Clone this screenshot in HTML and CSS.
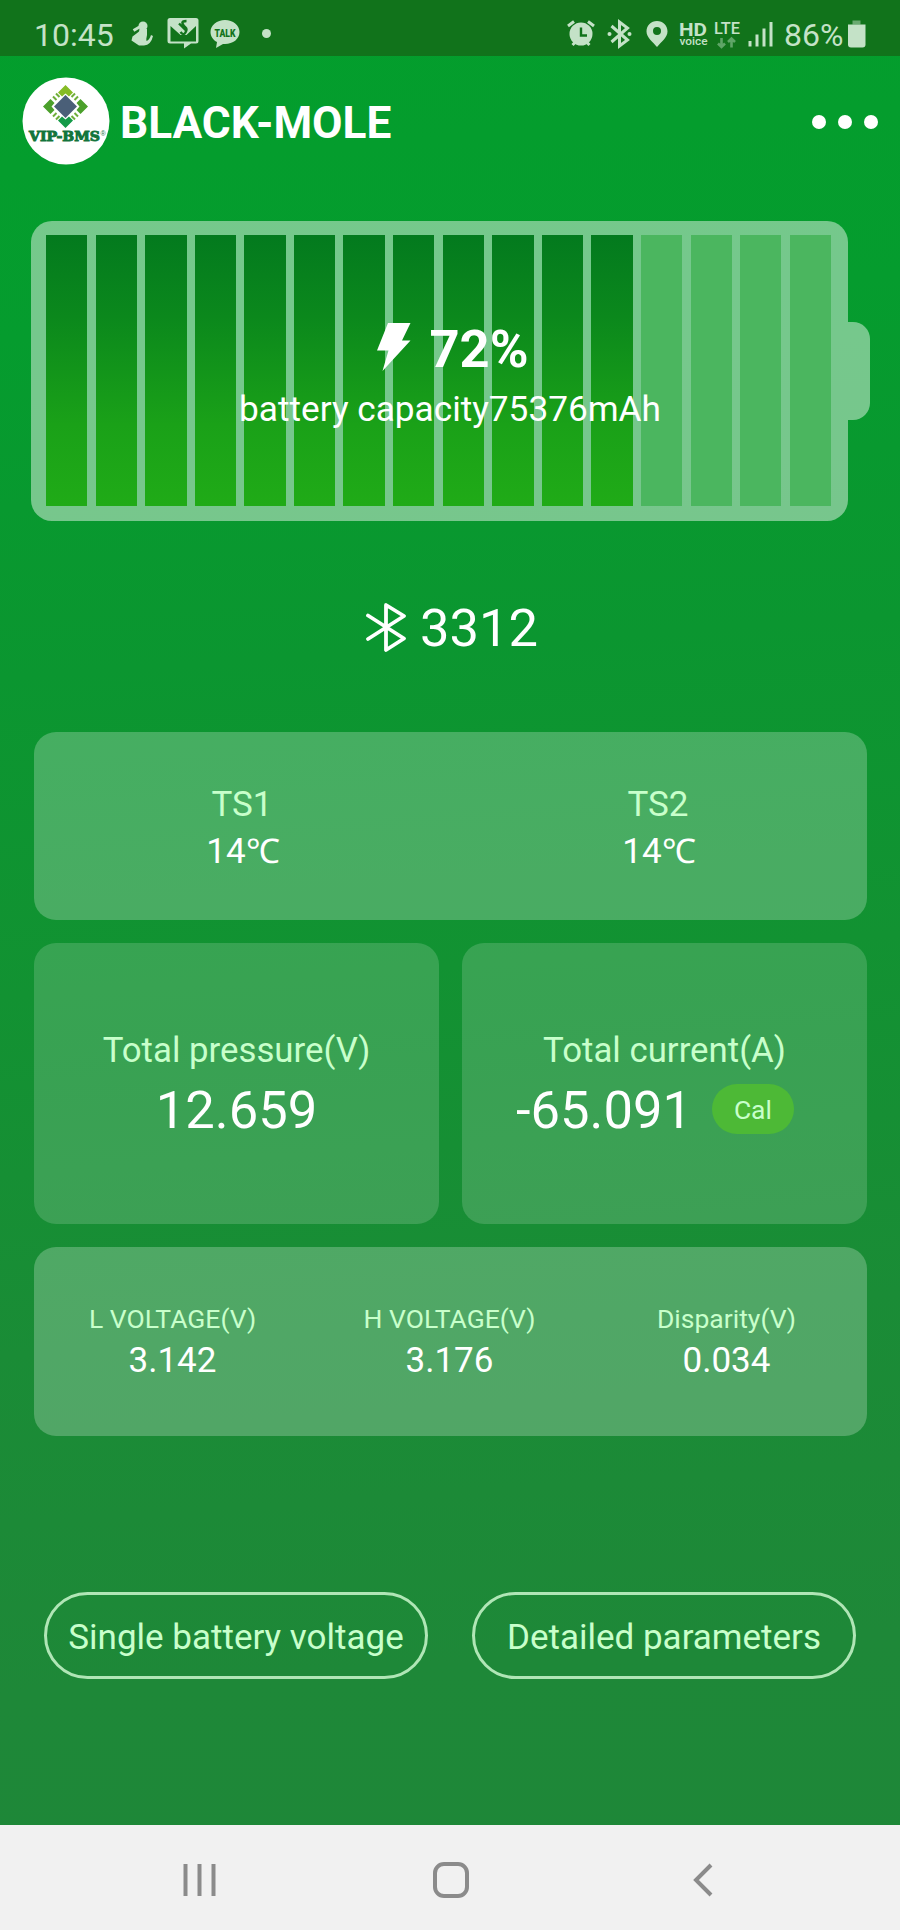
FILE: index.html
```html
<!DOCTYPE html>
<html lang="en">
<head>
  <meta charset="UTF-8">
  <title>BLACK-MOLE</title>
  <link rel="stylesheet" href="styles.css">
</head>
<body>

<!-- status bar -->
<div class="status">
  <span class="time">10:45</span>
  <svg class="notif" width="125" height="55" viewBox="125 0 125 55">
    <circle cx="143" cy="26" r="4.500"/>
    <path d="M139.500 29h7.500v6q-1 4-.5 6 3-1 4.500-6l2 1q-2 9-9 9.500h-5l-7.500-5 1-4 4-3 2.500-2z"/>
    <path d="M133.500 30.500l6-3.500" class="line"/>
    <path d="M170 18h26q2.500 0 2.500 2.500v20.500q0 2.500-2.500 2.500h-5l-7 5v-5h-14q-2.500 0-2.500-2.500V20.500q0-2.500 2.500-2.500zM170.500 26v15.500h25.500V26l-9.500 9h-6z" fill-rule="evenodd"/>
    <path d="M186.500 21q-5 0-4 2.500t3 4 0 5-5-.5M179 23.500l7 7" class="cut"/>
    <path d="M225 20c8 0 14.500 5 14.500 12s-6.500 12-14.500 12h-2l-7 4 1-6c-4-2-6.500-6-6.500-10 0-7 6.500-12 14.500-12z"/>
    <text x="214.500" y="36.500" textLength="21" lengthAdjust="spacingAndGlyphs" class="talk">TALK</text>
  </svg>
  <span class="more-dot"></span>
  <svg class="sys" width="220" height="55" viewBox="565 0 220 55">
    <!-- alarm -->
    <circle cx="582" cy="34" r="11.500"/>
    <path d="M569 26l6-4.500M589 21.500l6 4.500M573.500 45l3-3M590.500 45l-3-3" class="line"/>
    <path d="M582 27.500v8h6" class="cut"/>
    <!-- bluetooth -->
    <path d="M612.500 26l16 14-8 6V22l8 6-16 14" class="line"/>
    <circle cx="610.500" cy="34" r="2"/><circle cx="630.500" cy="34" r="2"/>
    <!-- location -->
    <path d="M658 21c6 0 10.500 4.500 10.500 10.500S662 42 658 47c-4-5-10.500-9.500-10.500-15.500S652 21 658 21zm0 6a4 4 0 1 0 0 8 4 4 0 0 0 0-8z" fill-rule="evenodd"/>
    <text x="680" y="35.500" textLength="28" lengthAdjust="spacingAndGlyphs" class="hd">HD</text>
    <text x="680.500" y="45" textLength="28" lengthAdjust="spacingAndGlyphs" class="voice">voice</text>
    <text x="715" y="33.500" textLength="26" lengthAdjust="spacingAndGlyphs" class="lte">LTE</text>
    <path d="M722.500 38v9M719 43.500l3.500 3.500 3.500-3.500M732.500 47.500v-9M729 42l3.500-3.500 3.500 3.500" class="dim"/>
    <!-- signal -->
    <path d="M749.500 41h3v5.500h-3zM756.500 34.500h3v12h-3zM763.500 28.500h3v18h-3zM770.500 22h3v24.500h-3z"/>
  </svg>
  <span class="percent">86%</span>
  <svg width="20" height="55" viewBox="848 0 20 55">
    <path d="M853.500 20.500h8v4h-8z" opacity=".5"/>
    <path d="M849 24.500h17.500v20q0 3-3 3h-11.500q-3 0-3-3z"/>
  </svg>
</div>

<header>
  <svg class="logo" width="88" height="88" viewBox="0 0 88 88">
    <circle cx="44" cy="44" r="43.500" fill="#fff"/>
    <path d="M43.500 8l7.500 7.500-4 4-3.500-3-3.500 3-4-4z" fill="#86bc25"/>
    <path d="M21 29.500l7.500-7.500 4 4-3 3.500 3 3.500-4 4z" fill="#4ba02b"/>
    <path d="M66 29.500l-7.500-7.500-4 4 3 3.500-3 3.500 4 4z" fill="#4ba02b"/>
    <path d="M43.500 51l-7.500-7.500 4-4 3.500 3 3.500-3 4 4z" fill="#149a48"/>
    <path d="M31 19.500l3.500 3.500M34 16.500l3.500 3.500M56 19.500l-3.500 3.500M53 16.500l-3.500 3.500M31 39.500l3.500-3.500M34 42.500l3.500-3.500M56 39.500l-3.500-3.500M53 42.500l-3.500-3.500" stroke="#6fae3a" stroke-width="2"/>
    <path d="M43.500 18l11.500 11.500-11.500 11.500-11.500-11.500z" fill="#4a5f78"/>
    <text x="7" y="63.500" textLength="71" lengthAdjust="spacingAndGlyphs" class="logo-text">VIP-BMS</text>
    <text x="78.500" y="58.500" class="logo-reg">®</text>
  </svg>
  <h1>BLACK-MOLE</h1>
  <div class="menu"><i></i><i></i><i></i></div>
</header>

<!-- battery -->
<div class="battery">
  <div class="cells">
    <i class="on"></i><i class="on"></i><i class="on"></i><i class="on"></i>
    <i class="on"></i><i class="on"></i><i class="on"></i><i class="on"></i>
    <i class="on"></i><i class="on"></i><i class="on"></i><i class="on"></i>
    <i></i><i></i><i></i><i></i>
  </div>
  <div class="nub"></div>
  <div class="charge">
    <div class="level">
      <svg width="34" height="48" viewBox="0 0 34 48"><path d="M11 0h22.500L25 17.500h8.500L5.500 48l6-20.500H0z" fill="#fff"/></svg>
      <span>72%</span>
    </div>
    <div class="capacity">battery capacity75376mAh</div>
  </div>
</div>

<div class="device">
  <svg width="40" height="49" viewBox="0 0 40 49"><path d="M2 12.500l36 23-18 11.500V2l18 11L2 36" fill="none" stroke="#fff" stroke-width="3.800" stroke-linejoin="round" stroke-linecap="round"/></svg>
  <span>3312</span>
</div>

<main>
  <div class="card temp">
    <div><p class="label">TS1</p><p class="value">14<span class="unit">℃</span></p></div>
    <div><p class="label">TS2</p><p class="value">14<span class="unit">℃</span></p></div>
  </div>
  <div class="pair">
    <div class="card total">
      <p class="label">Total pressure(V)</p>
      <p class="big">12.659</p>
    </div>
    <div class="card total">
      <p class="label">Total current(A)</p>
      <p class="big">-65.091 <span class="cal">Cal</span></p>
    </div>
  </div>
  <div class="card volts">
    <div><p class="label">L VOLTAGE(V)</p><p class="value">3.142</p></div>
    <div><p class="label">H VOLTAGE(V)</p><p class="value">3.176</p></div>
    <div><p class="label">Disparity(V)</p><p class="value">0.034</p></div>
  </div>
</main>

<div class="buttons">
  <a class="btn">Single battery voltage</a>
  <a class="btn">Detailed parameters</a>
</div>

<!-- android navigation -->
<nav>
  <svg width="34" height="36" viewBox="0 0 34 36"><path d="M2.500 2v32M16.500 2v32M30.500 2v32"/></svg>
  <svg class="home" width="36" height="36" viewBox="0 0 36 36"><rect x="2" y="2" width="32" height="32" rx="9"/></svg>
  <svg width="22" height="36" viewBox="0 0 22 36"><path d="M19 3L4 18l15 15"/></svg>
</nav>

</body>
</html>
```
FILE: styles.css
```css
* {
  box-sizing: border-box;
}

body {
  margin: 0;
  width: 900px;
  height: 1930px;
  display: flex;
  flex-direction: column;
  font-family: Roboto, sans-serif;
  color: #fff;
  background: linear-gradient(176deg, #039e2c 0%, #059c2e 17%, #0b9630 34%, #129232 50%, #1a8c36 68%, #1e8838 85%, #1e8738 100%);
  overflow: hidden;
}

p, h1 {
  margin: 0;
}

svg {
  display: block;
  flex: none;
}

/* status bar */
.status {
  height: 56px;
  display: flex;
  background: #11731b;
  color: #c4e2c7;
  fill: #c4e2c7;
  font-size: 32px;
  line-height: 71px;
}

.time {
  width: 91px;
  margin-left: 34px;
}

.status .line {
  fill: none;
  stroke: #c4e2c7;
  stroke-width: 3;
}

.status .cut {
  fill: none;
  stroke: #11731b;
  stroke-width: 2.4;
}

.status .dim {
  fill: none;
  stroke: #5fa567;
  stroke-width: 2.6;
}

.status .talk {
  font-size: 10px;
  font-weight: 900;
  fill: #11731b;
}

.hd {
  font-size: 18px;
  font-weight: 700;
}

.voice {
  font-size: 11px;
  font-weight: 500;
}

.lte {
  font-size: 16px;
  font-weight: 500;
}

.more-dot {
  width: 9px;
  height: 9px;
  margin: 29px 0 0 12px;
  border-radius: 50%;
  background: #c4e2c7;
}

.sys {
  margin-left: 293px;
}

.percent {
  width: 63px;
}

/* header */
header {
  height: 165px;
  padding: 21px 22px 0;
  display: flex;
  align-items: flex-start;
}

.logo-text {
  font: bold 13px "DejaVu Serif", serif;
  fill: #13743c;
  stroke: #13743c;
  stroke-width: .9;
}

.logo-reg {
  font: 7px "Liberation Sans", sans-serif;
  fill: #13743c;
}

h1 {
  margin-left: 10px;
  font-size: 44.2px;
  line-height: 93px;
  font-weight: 700;
}

.menu {
  display: flex;
  gap: 12px;
  margin: 38px 0 0 auto;
}

.menu i {
  width: 14px;
  height: 14px;
  border-radius: 50%;
  background: #fff;
}

/* battery */
.battery {
  position: relative;
  display: flex;
  align-items: center;
  height: 300px;
  margin-left: 31px;
}

.cells {
  display: flex;
  gap: 8.2px;
  width: 817px;
  height: 300px;
  padding: 14px 17px 15px 15px;
  border-radius: 21px;
  background: rgba(255, 255, 255, .45);
}

.cells i {
  flex: 1;
  background: #4bb65f;
}

.cells .on {
  background: linear-gradient(#037a1e, #0b881c 30%, #1aa118 70%, #20ab17);
}

.nub {
  width: 22px;
  height: 98px;
  border-radius: 0 17px 17px 0;
  background: rgba(255, 255, 255, .45);
}

.charge {
  position: absolute;
  top: 95px;
  left: 0;
  width: 838px;
  text-align: center;
}

.level {
  display: flex;
  justify-content: center;
  align-items: center;
  gap: 18px;
  height: 66px;
  padding-left: 6px;
  font-size: 52.5px;
  font-weight: 700;
}

.level svg {
  margin-bottom: 5px;
}

.capacity {
  font-size: 35.2px;
  line-height: 54px;
}

.device {
  display: flex;
  justify-content: center;
  align-items: center;
  gap: 14px;
  height: 211px;
  padding: 3px 0 0 4px;
  font-size: 52.5px;
}

.device svg {
  margin-bottom: 1px;
}

/* cards */
main {
  display: flex;
  flex-direction: column;
  gap: 23px;
  padding: 0 33px 0 34px;
}

.card {
  border-radius: 22px;
  text-align: center;
  background: rgba(255, 255, 255, .24);
}

.label {
  color: #c8ffcb;
  font-size: 35px;
  line-height: 47px;
}

.value {
  font-size: 35px;
  line-height: 47px;
}

.unit {
  letter-spacing: -2px;
  font-size: 34px;
}

.temp, .volts {
  display: flex;
  align-items: center;
}

.temp > div, .volts > div {
  flex: 1;
}

.temp {
  height: 188px;
  padding: 3px 1px 0 0;
}

.pair {
  display: flex;
  gap: 23px;
}

.total {
  flex: 1;
  height: 281px;
  padding-top: 84px;
  background: rgba(255, 255, 255, .16);
}

.big {
  display: flex;
  justify-content: center;
  align-items: center;
  font-size: 52.5px;
  line-height: 73px;
}

.total .label {
  font-size: 34.8px;
}

.cal {
  width: 82px;
  height: 50px;
  margin: -3px 19px 0 20px;
  border-radius: 25px;
  background: #4db936;
  color: #c8ffcb;
  font-size: 26.5px;
  line-height: 51px;
}

.volts {
  height: 189px;
  padding: 1px 2px 0 0;
}

.volts .label {
  font-size: 26.5px;
  line-height: 38px;
}

.volts .value {
  line-height: 46px;
}

/* buttons */
.buttons {
  display: flex;
  gap: 44px;
  padding: 156px 44px 0;
}

.btn {
  flex: 1;
  height: 87px;
  border: 3px solid #b0e6b6;
  border-radius: 44px;
  color: #c8ffcb;
  font-size: 35px;
  line-height: 85px;
  text-align: center;
}

nav {
  display: flex;
  align-items: center;
  height: 105px;
  margin-top: auto;
  padding: 5px 0 0 183px;
  background: #f1f1f1;
  fill: none;
  stroke: #8b8b8b;
  stroke-width: 4;
}

.home {
  margin: 0 223px 0 216px;
}
```
